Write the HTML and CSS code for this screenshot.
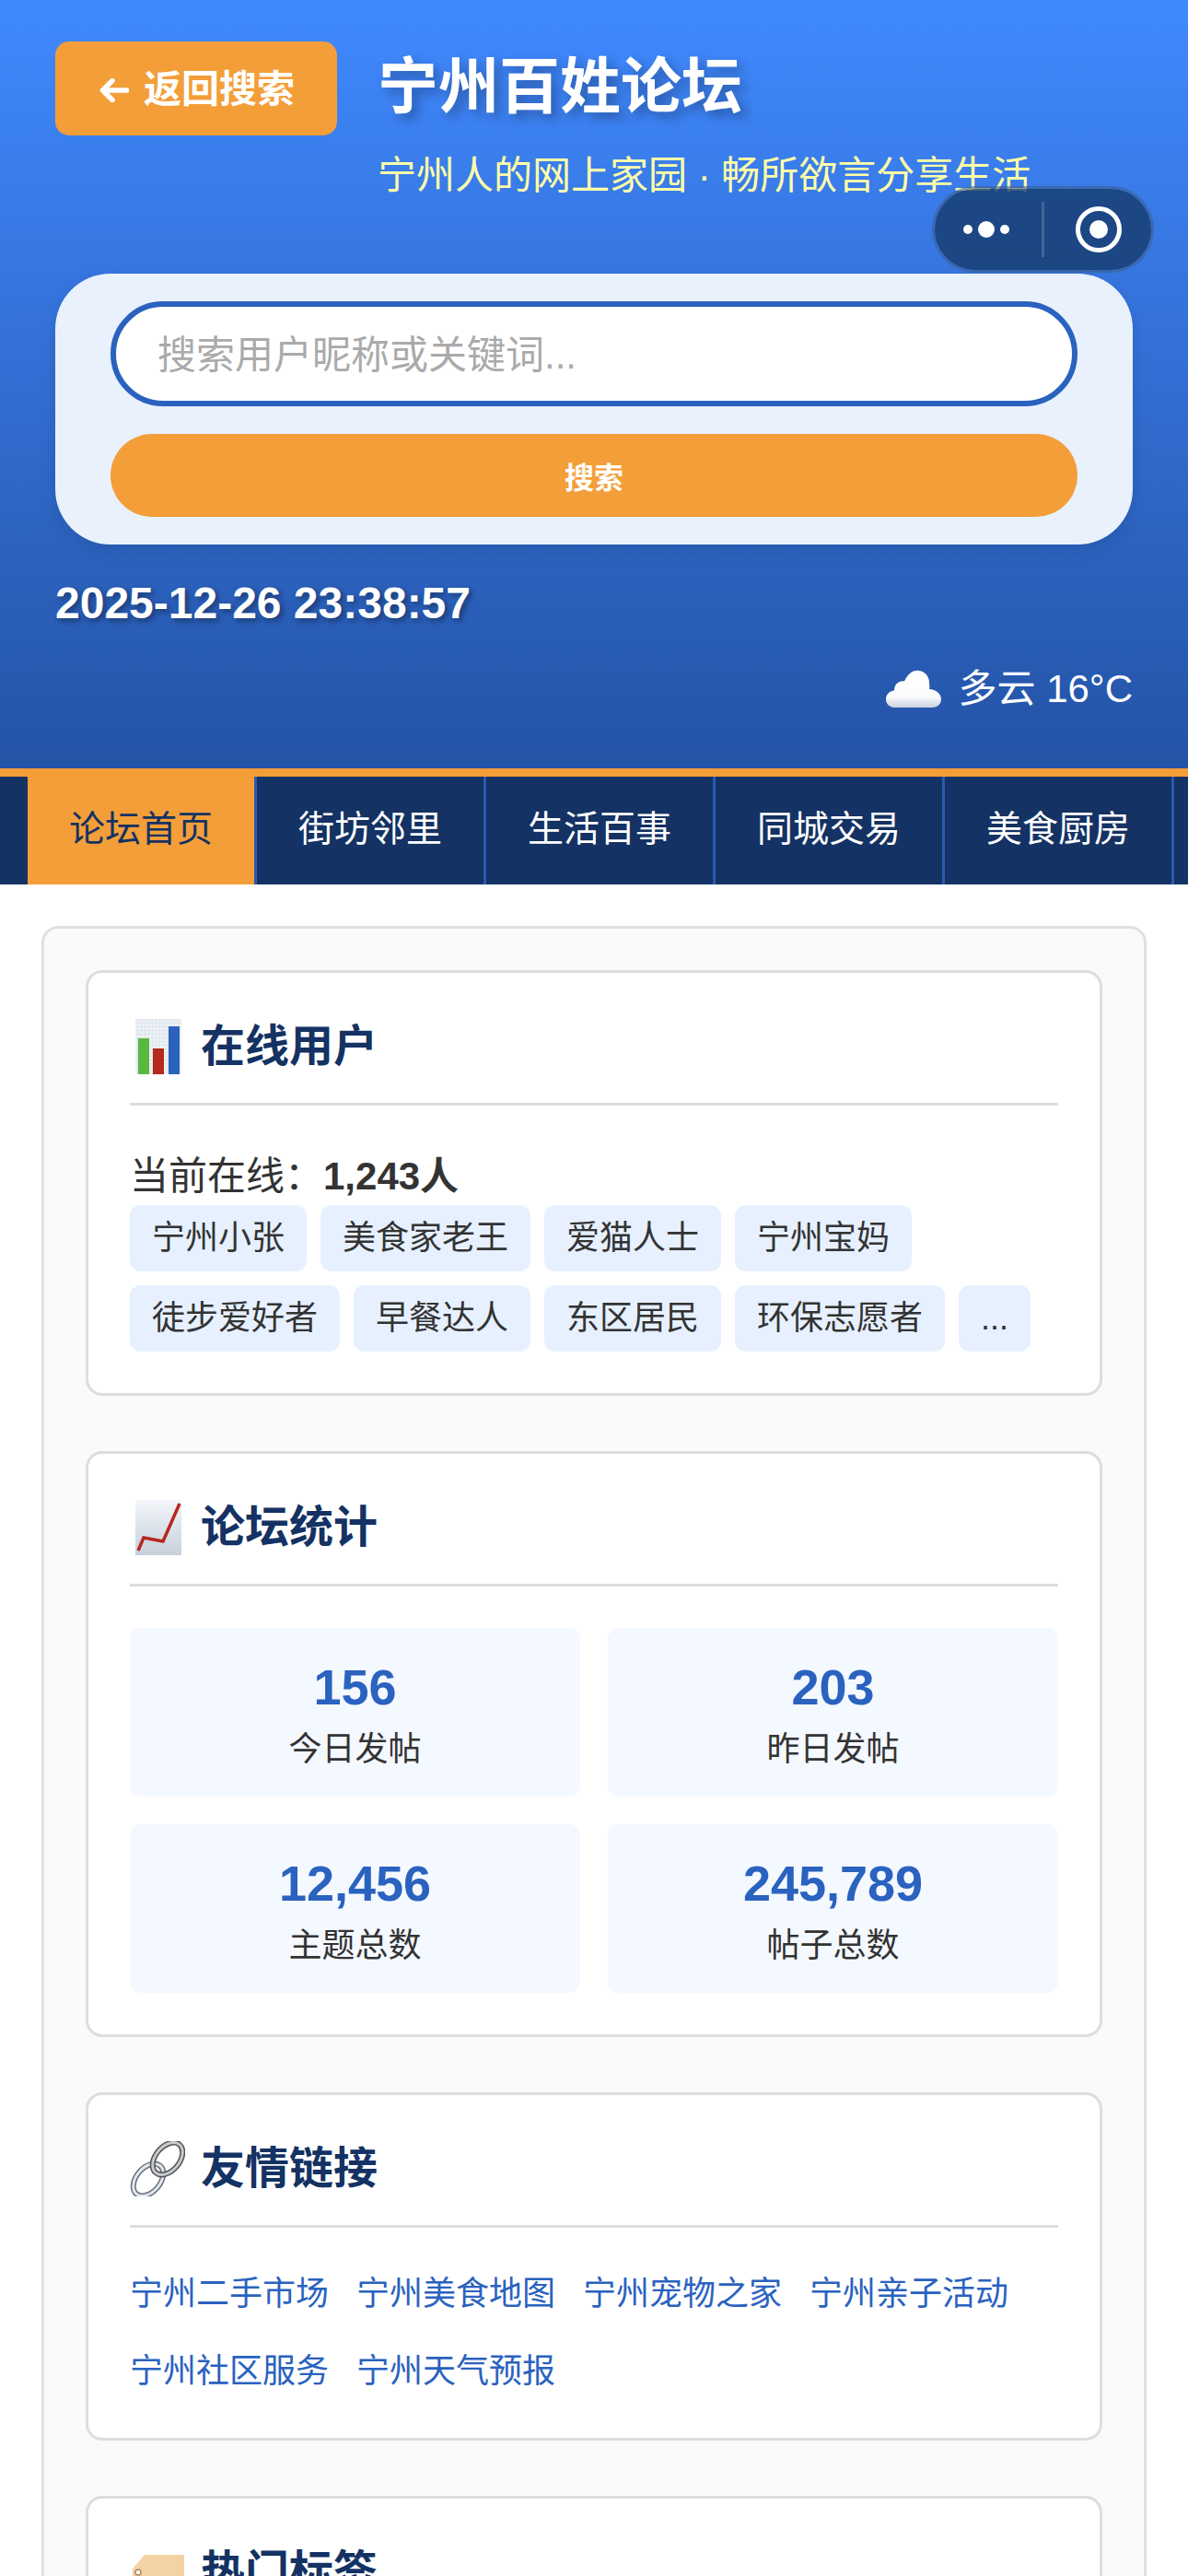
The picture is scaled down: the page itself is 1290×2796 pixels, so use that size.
FILE: index.html
```html
<!DOCTYPE html>
<html lang="zh-CN">

<head>
    <meta charset="UTF-8">
    <title>宁州百姓论坛</title>
    <link rel="stylesheet" href="styles.css">
</head>

<body>
    <header class="site-header">
        <div class="header-top">
            <a class="back-btn" href="#">
                <svg class="back-arrow" viewBox="0 0 32 26">
                    <path d="M30 13H4M14 2.5L3.5 13L14 23.5" fill="none" stroke="#fff" stroke-width="5.5" stroke-linecap="round" stroke-linejoin="round"/>
                </svg>
                返回搜索
            </a>
            <div class="site-title">
                <h1>宁州百姓论坛</h1>
                <p>宁州人的网上家园 · 畅所欲言分享生活</p>
            </div>
        </div>

        <div class="capsule">
            <svg class="capsule-dots" viewBox="0 0 60 20">
                <circle cx="5" cy="10" r="5" fill="#fff"/>
                <circle cx="25" cy="10" r="9" fill="#fff"/>
                <circle cx="45" cy="10" r="5" fill="#fff"/>
            </svg>
            <span class="capsule-line"></span>
            <svg class="capsule-target" viewBox="0 0 50 50">
                <circle cx="25" cy="25" r="22.5" fill="none" stroke="#fff" stroke-width="5"/>
                <circle cx="25" cy="25" r="10" fill="#fff"/>
            </svg>
        </div>

        <form class="search-box">
            <input class="search-input" type="text" placeholder="搜索用户昵称或关键词...">
            <button class="search-btn" type="button">搜索</button>
        </form>

        <div class="clock">2025-12-26 23:38:57</div>
        <div class="weather">
            <svg class="weather-icon" viewBox="0 0 60 42">
                <defs>
                    <linearGradient id="cloudFill" x1="0" y1="0" x2="0" y2="1">
                        <stop offset="0" stop-color="#fff"/>
                        <stop offset="0.7" stop-color="#fbfcfe"/>
                        <stop offset="1" stop-color="#c9d2de"/>
                    </linearGradient>
                </defs>
                <path d="M10 41C4 41 0 37 0 32C0 26.500 4 23 9 22.500C9 16 14 11.500 20 12.500C23 5 29.500 0 36 1C43 2 47.500 8 47 15C47.500 17 47.500 19 47 21C54.500 21.500 60 26 60 32C60 37 56 41 50 41Z" fill="url(#cloudFill)"/>
            </svg>
            <span>多云 16°C</span>
        </div>
    </header>

    <nav class="main-nav">
        <a class="nav-item active" href="#">论坛首页</a>
        <a class="nav-item" href="#">街坊邻里</a>
        <a class="nav-item" href="#">生活百事</a>
        <a class="nav-item" href="#">同城交易</a>
        <a class="nav-item" href="#">美食厨房</a>
    </nav>

    <main class="sidebar">
        <section class="card">
            <h3 class="card-title">
                <svg class="title-icon" viewBox="0 0 60 60">
                    <defs>
                        <pattern id="chartGrid" width="4" height="4" patternUnits="userSpaceOnUse">
                            <rect width="4" height="4" fill="#edf1f6"/>
                            <path d="M4 0H0V4" fill="none" stroke="#d5deea" stroke-width="1"/>
                        </pattern>
                    </defs>
                    <rect x="6" y="0" width="50" height="60" fill="url(#chartGrid)"/>
                    <rect x="9" y="21" width="12" height="39" fill="#5ab83e"/>
                    <rect x="25" y="32" width="12" height="28" fill="#b42a1c"/>
                    <rect x="42" y="8" width="12" height="52" fill="#2b62bd"/>
                </svg>
                在线用户
            </h3>
            <p class="online-count">当前在线：<strong>1,243人</strong></p>
            <div class="user-list">
                <span class="user-tag">宁州小张</span>
                <span class="user-tag">美食家老王</span>
                <span class="user-tag">爱猫人士</span>
                <span class="user-tag">宁州宝妈</span>
                <span class="user-tag">徒步爱好者</span>
                <span class="user-tag">早餐达人</span>
                <span class="user-tag">东区居民</span>
                <span class="user-tag">环保志愿者</span>
                <span class="user-tag">...</span>
            </div>
        </section>

        <section class="card">
            <h3 class="card-title">
                <svg class="title-icon" viewBox="0 0 60 60">
                    <defs>
                        <linearGradient id="trendFill" x1="0" y1="0" x2="0" y2="1">
                            <stop offset="0" stop-color="#f3f6fa"/>
                            <stop offset="1" stop-color="#c6d0dc"/>
                        </linearGradient>
                    </defs>
                    <rect x="6" y="0" width="50" height="60" fill="url(#trendFill)"/>
                    <polyline points="9,55 15,41 36,45 54,4" fill="none" stroke="#b9261f" stroke-width="3.500"/>
                </svg>
                论坛统计
            </h3>
            <div class="stat-grid">
                <div class="stat-box">
                    <div class="stat-num">156</div>
                    <div class="stat-label">今日发帖</div>
                </div>
                <div class="stat-box">
                    <div class="stat-num">203</div>
                    <div class="stat-label">昨日发帖</div>
                </div>
                <div class="stat-box">
                    <div class="stat-num">12,456</div>
                    <div class="stat-label">主题总数</div>
                </div>
                <div class="stat-box">
                    <div class="stat-num">245,789</div>
                    <div class="stat-label">帖子总数</div>
                </div>
            </div>
        </section>

        <section class="card">
            <h3 class="card-title">
                <svg class="title-icon" viewBox="0 0 60 60">
                    <g fill="none" transform="rotate(-50 20 42)">
                        <ellipse cx="20" cy="42" rx="20" ry="13" stroke="#6a6f78" stroke-width="6"/>
                        <ellipse cx="20" cy="42" rx="20" ry="13" stroke="#dfe6ef" stroke-width="3"/>
                    </g>
                    <g fill="none" transform="rotate(-50 41 19)">
                        <ellipse cx="41" cy="19" rx="20" ry="13" stroke="#55504f" stroke-width="6"/>
                        <ellipse cx="41" cy="19" rx="20" ry="13" stroke="#c4cad2" stroke-width="3"/>
                    </g>
                </svg>
                友情链接
            </h3>
            <div class="link-list">
                <a href="#">宁州二手市场</a>
                <a href="#">宁州美食地图</a>
                <a href="#">宁州宠物之家</a>
                <a href="#">宁州亲子活动</a>
                <a href="#">宁州社区服务</a>
                <a href="#">宁州天气预报</a>
            </div>
        </section>

        <section class="card">
            <h3 class="card-title">
                <svg class="title-icon" viewBox="0 0 60 60">
                    <path d="M3 26L16 11H59V60H3Z" fill="#f3d3a5"/>
                    <circle cx="9" cy="30" r="3" fill="#fff" stroke="#a98a60" stroke-width="1.500"/>
                </svg>
                热门标签
            </h3>
        </section>
    </main>
</body>

</html>
```

FILE: styles.css
```css
* {
    margin: 0;
    padding: 0;
    box-sizing: border-box;
}

html,
body {
    height: 100vh;
    overflow: hidden;
}

body {
    background: #fff;
    color: #333;
    font-family: "Liberation Sans", "Noto Sans CJK SC", sans-serif;
    font-size: 42px;
    line-height: 1.5;
}

a {
    text-decoration: none;
}

.site-header {
    position: relative;
    padding: 45px 60px 55px;
    background: linear-gradient(180deg, #4089ff, #2453a6);
    border-bottom: 9px solid #f39e38;
}

.header-top {
    display: flex;
    align-items: flex-start;
    gap: 44px;
}

.back-btn {
    display: flex;
    align-items: center;
    gap: 16px;
    height: 102px;
    padding: 3px 46px 0 48px;
    background: #f39e38;
    border-radius: 15px;
    color: #fff;
    font-size: 41px;
    font-weight: bold;
}

.back-arrow {
    width: 32px;
    height: 26px;
}

.site-title h1 {
    color: #fff;
    font-size: 66px;
    line-height: 99px;
    text-shadow: 6px 6px 12px rgba(0, 0, 0, 0.3);
}

.site-title p {
    margin-top: 15px;
    color: #ffffa8;
    font-size: 42px;
    line-height: 63px;
}

.capsule {
    position: absolute;
    top: 202px;
    left: 1012px;
    display: flex;
    align-items: center;
    width: 241px;
    height: 94px;
    background: rgba(21, 59, 108, 0.8);
    background-clip: padding-box;
    border: 3px solid rgba(60, 95, 145, 0.6);
    border-radius: 47px;
}

.capsule-dots {
    width: 60px;
    height: 20px;
    margin-left: 31px;
}

.capsule-line {
    width: 3px;
    height: 60px;
    margin-left: 25px;
    background: #3f6699;
}

.capsule-target {
    width: 50px;
    height: 50px;
    margin-left: 34px;
}

.search-box {
    margin-top: 75px;
    padding: 30px 60px;
    background: #e8f1fc;
    border-radius: 60px;
    box-shadow: 0 6px 18px rgba(0, 0, 0, 0.1);
}

.search-input {
    display: block;
    width: 100%;
    height: 114px;
    padding: 3px 45px 0;
    background: #fff;
    border: 6px solid #2a62bf;
    border-radius: 57px;
    outline: none;
    font-family: inherit;
    font-size: 42px;
}

.search-input::placeholder {
    color: #aaa;
}

.search-btn {
    display: block;
    width: 100%;
    height: 90px;
    margin-top: 30px;
    background: #f39e38;
    border: none;
    border-radius: 45px;
    color: #fff;
    font-family: inherit;
    font-size: 32px;
    font-weight: bold;
}

.clock {
    margin-top: 28px;
    color: #fff;
    font-size: 48px;
    font-weight: bold;
    line-height: 72px;
    text-shadow: 3px 3px 6px rgba(0, 0, 0, 0.4);
}

.weather {
    display: flex;
    justify-content: flex-end;
    align-items: center;
    gap: 18px;
    margin-top: 25px;
    color: #fff;
    line-height: 63px;
}

.weather-icon {
    width: 60px;
    height: 42px;
}

.main-nav {
    display: flex;
    height: 117px;
    padding-left: 30px;
    overflow: hidden;
    background: #143263;
}

.nav-item {
    flex: none;
    padding: 0 45px;
    border-right: 3px solid #2a5ab0;
    color: #fff;
    font-size: 39px;
    line-height: 114px;
}

.nav-item.active {
    background: #f39e38;
    color: #143263;
}

.sidebar {
    margin: 45px 45px 0;
    padding: 45px;
    background: #fafafa;
    border: 3px solid #e0e0e0;
    border-radius: 18px;
}

.card {
    padding: 45px;
    margin-bottom: 60px;
    background: #fff;
    border: 3px solid #ddd;
    border-radius: 18px;
}

.card-title {
    display: flex;
    align-items: center;
    gap: 17px;
    height: 99px;
    padding: 4px 0 30px;
    border-bottom: 3px solid #ddd;
    color: #143263;
    font-size: 48px;
}

.title-icon {
    flex: none;
    width: 60px;
    height: 60px;
}

.online-count {
    margin-top: 45px;
    line-height: 63px;
}

.user-list {
    display: flex;
    flex-wrap: wrap;
    gap: 15px;
}

.user-tag {
    padding: 15px 24px;
    background: #e6f0ff;
    border-radius: 12px;
    font-size: 36px;
    line-height: 42px;
}

.stat-grid {
    display: grid;
    grid-template-columns: 1fr 1fr;
    gap: 30px;
    margin-top: 45px;
}

.stat-box {
    padding: 24px;
    background: #f4f8ff;
    border-radius: 12px;
    text-align: center;
}

.stat-num {
    color: #2a62bf;
    font-size: 54px;
    font-weight: bold;
    line-height: 81px;
}

.stat-label {
    font-size: 36px;
    line-height: 54px;
}

.link-list {
    display: flex;
    flex-wrap: wrap;
    gap: 30px;
    margin-top: 45px;
}

.link-list a {
    color: #2a62bf;
    font-size: 36px;
    line-height: 54px;
}
```
